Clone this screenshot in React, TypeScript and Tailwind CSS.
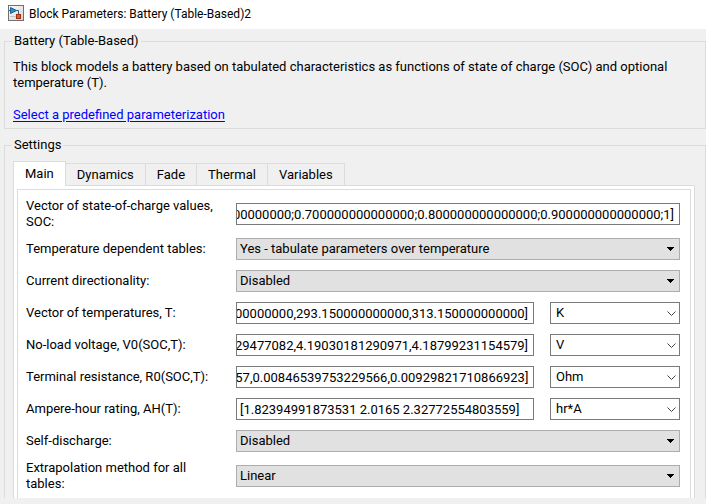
import type { ReactNode } from "react";

type Field = {
  id: string;
  label: string;
  kind: "choice" | "value";
  value: string;
  unit?: string;
  scrolled?: boolean;
};

const tabs = ["Main", "Dynamics", "Fade", "Thermal", "Variables"];

const fields: Field[] = [
  {
    id: "soc",
    label: "Vector of state-of-charge values, SOC:",
    kind: "value",
    value: "0.600000000000000;0.700000000000000;0.800000000000000;0.900000000000000;1]",
    scrolled: true,
  },
  { id: "tables", label: "Temperature dependent tables:", kind: "choice", value: "Yes - tabulate parameters over temperature" },
  { id: "direction", label: "Current directionality:", kind: "choice", value: "Disabled" },
  { id: "temps", label: "Vector of temperatures, T:", kind: "value", value: "00000000,293.150000000000,313.150000000000]", unit: "K", scrolled: true },
  { id: "voltage", label: "No-load voltage, V0(SOC,T):", kind: "value", value: "29477082,4.19030181290971,4.18799231154579]", unit: "V", scrolled: true },
  { id: "resistance", label: "Terminal resistance, R0(SOC,T):", kind: "value", value: "057,0.00846539753229566,0.00929821710866923]", unit: "Ohm", scrolled: true },
  { id: "rating", label: "Ampere-hour rating, AH(T):", kind: "value", value: "[1.82394991873531 2.0165 2.32772554803559]", unit: "hr*A" },
  { id: "discharge", label: "Self-discharge:", kind: "choice", value: "Disabled" },
  { id: "extrapolation", label: "Extrapolation method for all tables:", kind: "choice", value: "Linear" },
];

function scrollToEnd(el: HTMLInputElement | null) {
  if (el) el.scrollLeft = el.scrollWidth;
}

function BlockIcon() {
  return (
    <svg width="16" height="16" viewBox="0 0 16 16" aria-hidden="true">
      <defs>
        <linearGradient id="face" x1="0" y1="0" x2="1" y2="1">
          <stop offset="0" stopColor="#ffffff" />
          <stop offset="1" stopColor="#d2d2d2" />
        </linearGradient>
      </defs>
      <rect x="0.5" y="0.5" width="15" height="15" fill="url(#face)" stroke="#707070" />
      <path d="M1 5.500h2M8 5.500h2.500v4" fill="none" stroke="#3b5a78" />
      <path d="M2.500 2.500l6 3-6 3z" fill="#2a8fce" stroke="#175f96" />
      <path d="M2 11.500h6" fill="none" stroke="#c4c4c4" />
      <rect x="8.500" y="9.500" width="4" height="4" fill="#dd5a35" stroke="#9c2f10" />
    </svg>
  );
}

function Group({ title, children, className }: { title: string; children: ReactNode; className: string }) {
  return (
    <fieldset className={"mr-0 ml-1 min-w-0 border border-[#dcdcdc] " + className}>
      <legend className="-ml-px px-0.5 leading-4">{title}</legend>
      {children}
    </fieldset>
  );
}

function Choice({ field }: { field: Field }) {
  return (
    <div className="relative flex-1">
      <select id={field.id} className="block h-[22px] w-full appearance-none border border-[#adadad] bg-[#e1e1e1] pr-5 pl-[3px] outline-none">
        <option>{field.value}</option>
      </select>
      <svg className="pointer-events-none absolute top-[9px] right-1.5" width="7" height="4" viewBox="0 0 7 4" aria-hidden="true">
        <path d="M0 0h7v1H6v1H5v1H4v1H3V3H2V2H1V1H0z" fill="#000" />
      </svg>
    </div>
  );
}

function Unit({ field }: { field: Field }) {
  return (
    <div className="relative w-[130px] shrink-0">
      <select aria-label={field.label + " unit"} className="block h-[22px] w-full appearance-none border border-[#7a7a7a] bg-white pr-5 pl-[5px] outline-none">
        <option>{field.unit}</option>
      </select>
      <svg className="pointer-events-none absolute top-[9px] right-1" width="9" height="5" viewBox="0 0 9 5" aria-hidden="true">
        <path d="M0.500 0.500l4 4 4-4" fill="none" stroke="#444" />
      </svg>
    </div>
  );
}

function Row({ field }: { field: Field }) {
  return (
    <div className="flex items-center">
      <div className="w-[210px] shrink-0">
        <label htmlFor={field.id} className="-my-0.5 block max-w-[195px] leading-4">
          {field.label}
        </label>
      </div>
      <div className="flex min-w-0 flex-1 gap-4">
        {field.kind === "choice" ? (
          <Choice field={field} />
        ) : (
          <input
            id={field.id}
            ref={field.scrolled ? scrollToEnd : undefined}
            defaultValue={field.value}
            className={"h-[22px] min-w-0 flex-1 border border-[#7a7a7a] bg-white outline-none " + (field.scrolled ? "pr-[5px]" : "px-[3px]")}
          />
        )}
        {field.unit && <Unit field={field} />}
      </div>
    </div>
  );
}

export default function App() {
  return (
    <div className="min-h-screen bg-[#f0f0f0] font-['Roboto','Noto_Sans',sans-serif] text-[13px] leading-4 text-black">
      <header className="flex h-[29px] items-start gap-[5px] bg-white px-2 pt-[5px]">
        <BlockIcon />
        <h1 className="text-xs leading-[18px]">Block Parameters: Battery (Table-Based)2</h1>
      </header>
      <main className="flex flex-col gap-2 pt-1">
        <Group title="Battery (Table-Based)" className="px-2 pb-[5px]">
          <p className="pt-2.5">
            This block models a battery based on tabulated characteristics as functions of state of charge (SOC) and optional temperature (T).
          </p>
          <a href="#parameterization" className="mt-4 inline-block text-[#0000ff] underline underline-offset-2">
            Select a predefined parameterization
          </a>
        </Group>
        <Group title="Settings" className="border-b-0 pr-2.5 pl-2">
          <div role="tablist" className="mt-2 flex items-end">
            {tabs.map((tab, i) => (
              <button
                key={tab}
                role="tab"
                aria-selected={i === 0}
                className={
                  i === 0
                    ? "relative z-10 -mb-px h-[25px] border border-b-0 border-[#dcdcdc] bg-white px-[11px]"
                    : "h-[22px] border-t border-r border-[#dcdcdc] px-[11px]"
                }
              >
                {tab}
              </button>
            ))}
          </div>
          <div role="tabpanel" className="border border-b-0 border-[#dcdcdc] bg-white px-[3px] pt-[3px]">
            <div className="flex flex-col gap-2.5 border border-b-0 border-[#dcdcdc] pt-2.5 pr-2.5 pb-2 pl-2">
              {fields.map((field) => (
                <Row key={field.id} field={field} />
              ))}
            </div>
          </div>
        </Group>
      </main>
    </div>
  );
}
